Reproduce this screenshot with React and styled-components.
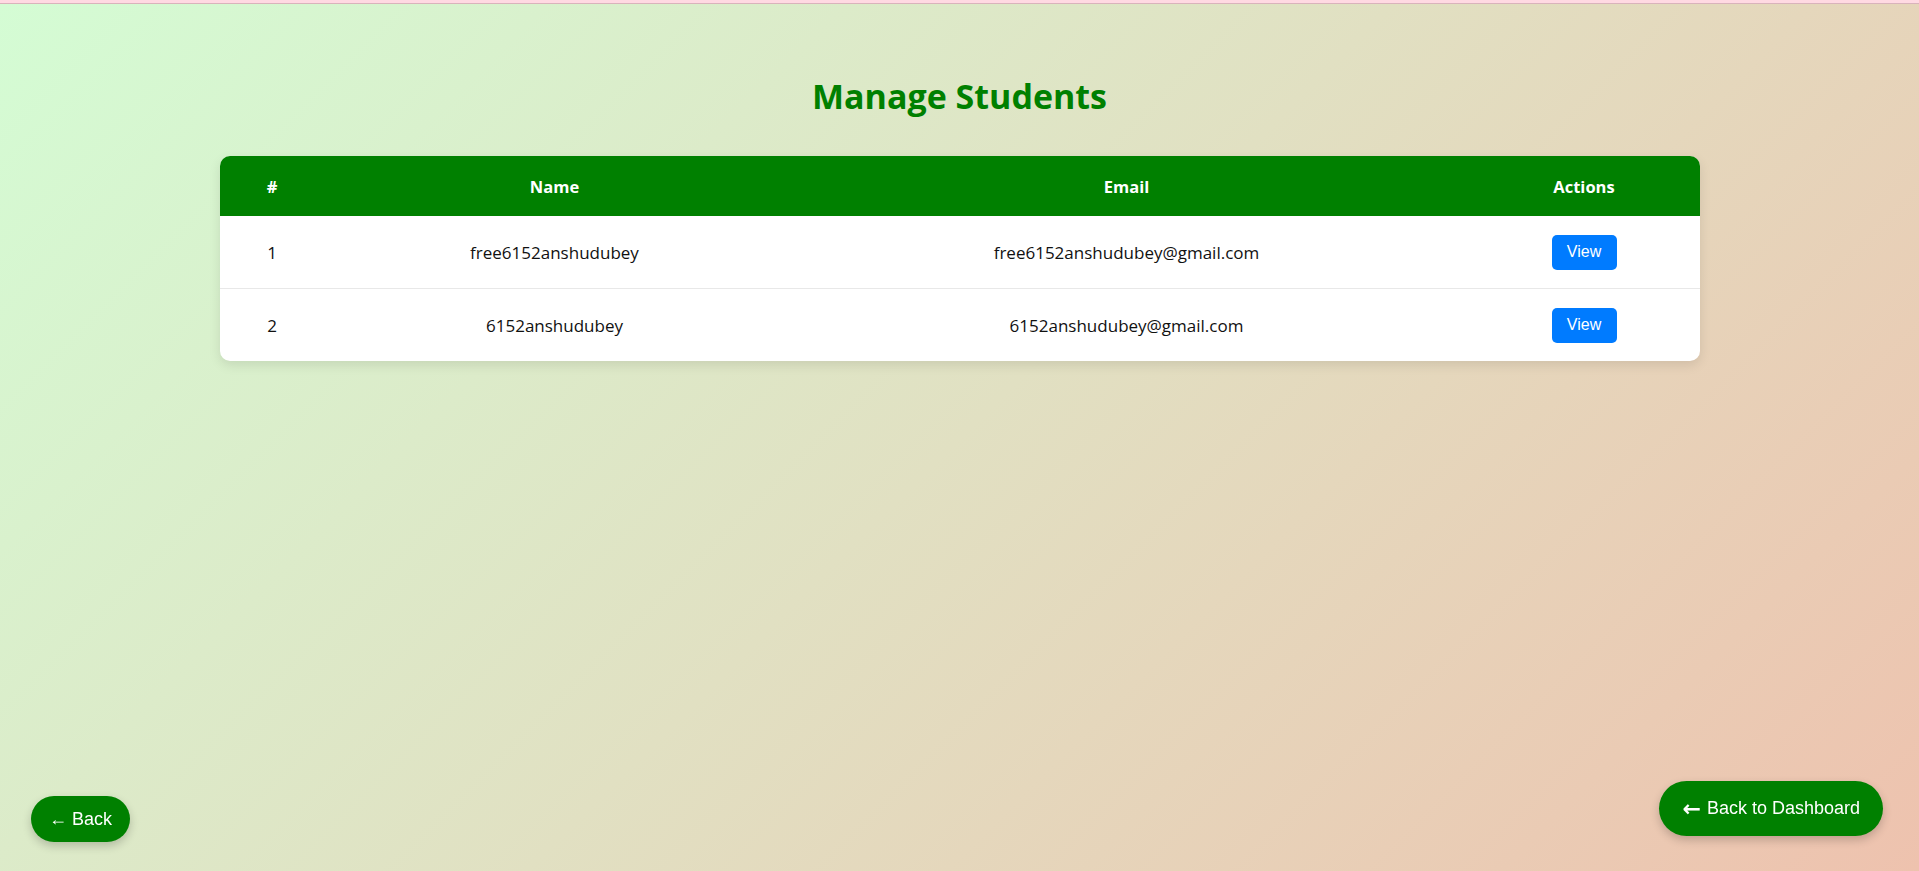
import React from "react";
import styled, { createGlobalStyle } from "styled-components";

const Global = createGlobalStyle`
  html, body { margin: 0; padding: 0; }
  body {
    font-family: "Open Sans", "Noto Sans", sans-serif;
    background: #ffd9e2;
  }
`;

const TopStrip = styled.div`
  height: 3px;
  background: #ffd9e2;
  border-bottom: 1px solid #d9b3bb;
`;

const Page = styled.div`
  min-height: 867px;
  background: linear-gradient(135deg, #d4fcd4 0%, #e1e0c2 50%, #eec2ae 100%);
  padding-top: 70px;
  box-sizing: border-box;
  display: flex;
  flex-direction: column;
  align-items: center;
`;

const Title = styled.h2`
  margin: 0 0 38px;
  font-size: 34px;
  line-height: 44px;
  font-weight: 700;
  color: #008000;
`;

const Card = styled.div`
  width: 1480px;
  border-radius: 10px;
  overflow: hidden;
  background: #fff;
  box-shadow: 0 4px 12px rgba(0, 0, 0, 0.1);
`;

const Table = styled.table`
  width: 100%;
  border-collapse: collapse;
  table-layout: fixed;
`;

const Head = styled.th`
  height: 60px;
  padding: 0;
  background: #008000;
  color: #fff;
  font-size: 16.5px;
  font-weight: 700;
  text-align: center;
  width: ${(p) => p.$w}px;
`;

const Row = styled.tr`
  & + & td { border-top: 1px solid #e8e8e8; }
`;

const Cell = styled.td`
  height: 72px;
  padding: 0;
  text-align: center;
  font-size: 17px;
  color: #111;
`;

const ViewButton = styled.button`
  width: 65px;
  height: 35px;
  border: none;
  border-radius: 5px;
  background: #007bff;
  color: #fff;
  font-family: "Liberation Sans", Arial, sans-serif;
  font-size: 16px;
  cursor: pointer;
`;

const FloatButton = styled.button`
  position: fixed;
  bottom: ${(p) => p.$bottom}px;
  ${(p) => (p.$side === "left" ? `left: ${p.$offset}px;` : `right: ${p.$offset}px;`)}
  height: ${(p) => p.$h}px;
  padding: 0 ${(p) => p.$px}px;
  border: none;
  border-radius: 999px;
  background: #008000;
  color: #fff;
  font-family: "Liberation Sans", Arial, sans-serif;
  font-size: ${(p) => p.$fs}px;
  box-shadow: 0 4px 10px rgba(0, 0, 0, 0.2);
  cursor: pointer;
  white-space: nowrap;
  display: inline-flex;
  align-items: center;
  gap: 6px;
`;

const Arrow = styled.span`
  font-family: "DejaVu Sans", sans-serif;
  font-weight: 700;
  font-size: 22px;
  line-height: 1;
`;

const students = [
  { id: 1, name: "free6152anshudubey", email: "free6152anshudubey@gmail.com" },
  { id: 2, name: "6152anshudubey", email: "6152anshudubey@gmail.com" },
];

export default function App() {
  return (
    <>
      <Global />
      <TopStrip />
      <Page>
        <Title>Manage Students</Title>
        <Card>
          <Table>
            <thead>
              <tr>
                <Head $w={105}>#</Head>
                <Head $w={460}>Name</Head>
                <Head $w={684}>Email</Head>
                <Head $w={231}>Actions</Head>
              </tr>
            </thead>
            <tbody>
              {students.map((s) => (
                <Row key={s.id}>
                  <Cell>{s.id}</Cell>
                  <Cell>{s.name}</Cell>
                  <Cell>{s.email}</Cell>
                  <Cell>
                    <ViewButton>View</ViewButton>
                  </Cell>
                </Row>
              ))}
            </tbody>
          </Table>
        </Card>
      </Page>
      <FloatButton $side="left" $offset={31} $bottom={29} $h={46} $px={18} $fs={18}>
        ← Back
      </FloatButton>
      <FloatButton $side="right" $offset={36} $bottom={35} $h={55} $px={23} $fs={18}>
        <Arrow>←</Arrow>Back to Dashboard
      </FloatButton>
    </>
  );
}
